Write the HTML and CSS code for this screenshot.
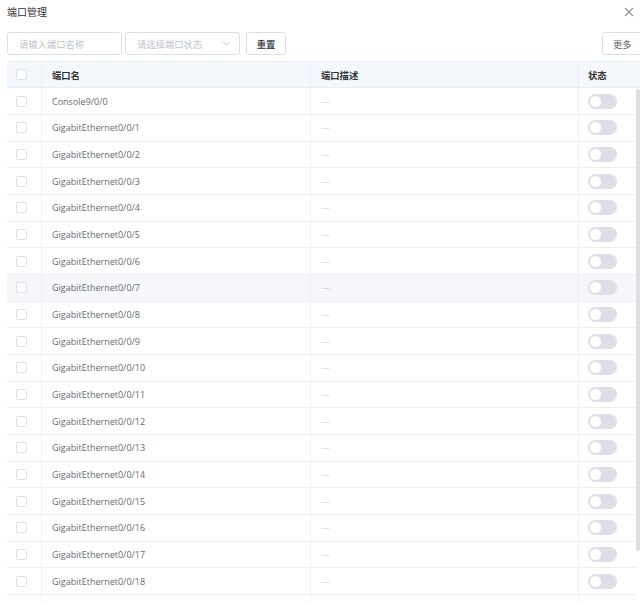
FILE: index.html
```html
<!DOCTYPE html>
<html lang="zh">
<head>
<meta charset="utf-8">
<title>端口管理</title>
<link rel="stylesheet" href="styles.css">
</head>
<body>
<div class="dialog">
  <div class="dlg-header">
    <span class="title">端口管理</span>
    <span class="close"><svg width="10" height="10" viewBox="0 0 10 10"><path d="M1 1L9 9M9 1L1 9" stroke="#909399" stroke-width="1.1" fill="none"/></svg></span>
  </div>
  <div class="toolbar">
    <div class="input">请输入端口名称</div>
    <div class="input select"><span>请选择端口状态</span><svg width="8" height="5" viewBox="0 0 8 5"><path d="M0.5 0.5L4 4L7.5 0.5" stroke="#c0c4cc" stroke-width="0.9" fill="none"/></svg></div>
    <div class="btn">重置</div>
    <div class="spacer"></div>
    <div class="btn more">更多</div>
  </div>
  <div class="table">
    <div class="row head">
      <div class="cell c-check"><span class="checkbox"></span></div>
      <div class="cell c-name">端口名</div>
      <div class="cell c-desc">端口描述</div>
      <div class="cell c-status">状态</div>
    </div>
    <div class="body">
      <div class="rows" id="rows"></div>
      <div class="scrollbar"><div class="thumb"></div></div>
    </div>
  </div>
</div>
<script src="app.js"></script>
</body>
</html>
```
FILE: styles.css
```css
* { box-sizing: border-box; }
html, body { margin: 0; padding: 0; background: #fff; overflow: hidden; height: 601px; }
body { font-family: "Noto Sans CJK SC", "Open Sans", sans-serif; color: #606266; }
.dialog { width: 640px; height: 601px; overflow: hidden; }
.dlg-header { height: 32px; display: flex; align-items: flex-start; justify-content: space-between; padding: 4px 6px 0 7px; }
.title { font-size: 10px; line-height: 16px; color: #303133; }
.close { display: flex; width: 10px; height: 10px; margin-top: 3px; }
.toolbar { display: flex; align-items: center; padding-left: 7px; height: 23px; margin-bottom: 6px; width: 650px; }
.input { width: 115px; height: 23px; border: 1px solid #dcdfe6; border-radius: 3px; font-size: 9.3px; color: #c0c4cc; padding-left: 11px; display: flex; align-items: center; margin-right: 3px; }
.select { justify-content: space-between; padding-right: 9px; margin-right: 6px; }
.btn { height: 23px; border: 1px solid #dcdfe6; border-radius: 3px; font-size: 9.3px; color: #303133; display: flex; align-items: center; justify-content: center; width: 40px; font-weight: 500; }
.spacer { flex: 1; }
.more { width: 48px; color: #606266; justify-content: flex-start; padding-left: 10px; font-weight: 400; }
.table { margin-left: 7px; width: 633px; }
.row { display: flex; height: 26.67px; border-bottom: 1px solid #ebeef5; }
.head { height: 27.4px; background: #f4f7fc; border-top: 1px solid #ebeef5; font-weight: 700; color: #303133; font-size: 9.3px; }
.cell { display: flex; align-items: center; border-right: 1px solid #ebeef5; padding-left: 10px; }
.cell:last-child { border-right: none; }
.c-check { width: 35px; padding-left: 9px; }
.c-name { width: 269px; }
.c-desc { width: 268px; }
.c-status { flex: 1; padding-left: 9px; }
.checkbox { width: 11px; height: 11px; border: 1px solid #dcdfe6; border-radius: 2px; background: #fff; }
.body { display: flex; height: 520px; }
.rows { width: 629px; font-family: "Open Sans", "Noto Sans CJK SC", sans-serif; font-size: 9px; color: #666a70; }
.rows .row { height: 26.67px; }
.rows .row.hover { background: #f5f7fa; }
.dash { color: #c8ccd3; font-size: 9px; }
.toggle { width: 29px; height: 15px; border-radius: 8px; background: #dcdfe6; position: relative; }
.toggle::after { content: ""; position: absolute; left: 2px; top: 2px; width: 11px; height: 11px; border-radius: 50%; background: #fff; }
.scrollbar { width: 4px; }
.thumb { width: 4px; height: 462px; margin-top: 1px; background: #dedfe2; border-radius: 2px; }
```
FILE: app.js
```js
var rows = document.getElementById('rows');
var names = ['Console9/0/0'];
for (var i = 1; i <= 18; i++) names.push('GigabitEthernet0/0/' + i);
var html = '';
names.forEach(function (n, idx) {
  html += '<div class="row' + (idx === 7 ? ' hover' : '') + '">' +
    '<div class="cell c-check"><span class="checkbox"></span></div>' +
    '<div class="cell c-name">' + n + '</div>' +
    '<div class="cell c-desc"><span class="dash">—</span></div>' +
    '<div class="cell c-status"><span class="toggle"></span></div>' +
    '</div>';
});
html += '<div class="row"><div class="cell c-check"></div><div class="cell c-name"></div><div class="cell c-desc"></div><div class="cell c-status"></div></div>';
rows.innerHTML = html;
```
